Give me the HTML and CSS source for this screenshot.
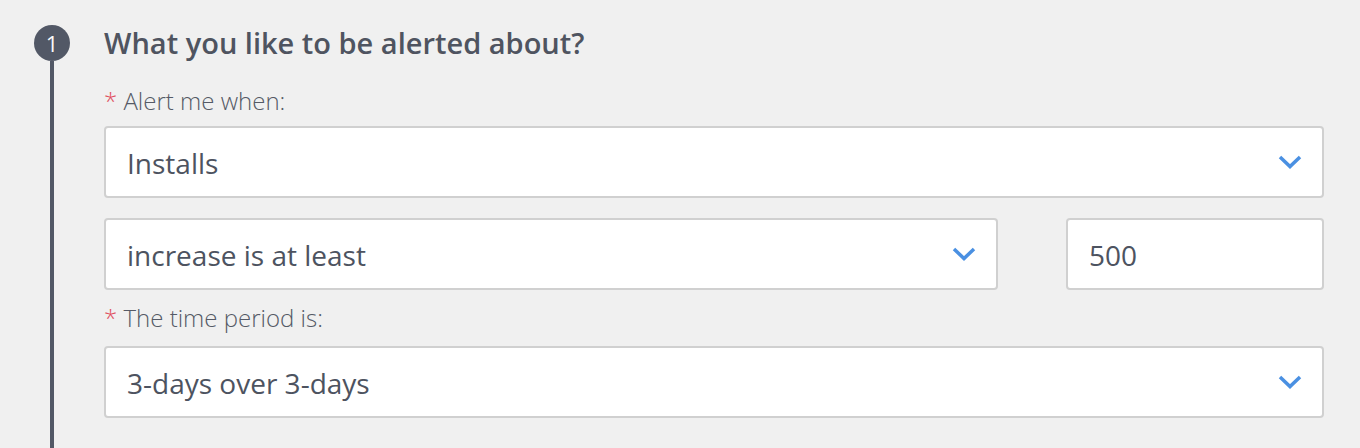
FILE: index.html
```html
<!DOCTYPE html>
<html lang="en">
<head>
	<meta charset="UTF-8" />
	<meta name="viewport" content="width=device-width, initial-scale=1.0" />
	<title>Alert setup</title>
	<link rel="stylesheet" href="styles.css">
</head>
<body>
	<div class="step">
		<div class="step-rail">
			<span class="step-num">1</span>
			<span class="step-line"></span>
		</div>
		<div class="step-body">
			<h2 class="step-title">What you like to be alerted about?</h2>

			<label class="field-label"><span class="req">*</span> Alert me when:</label>
			<div class="select">
				<span>Installs</span>
				<svg class="chevron" viewBox="0 0 24 14" width="24" height="14"><polyline points="2,2 12,11.5 22,2" /></svg>
			</div>

			<div class="row">
				<div class="select select-grow">
					<span>increase is at least</span>
					<svg class="chevron" viewBox="0 0 24 14" width="24" height="14"><polyline points="2,2 12,11.5 22,2" /></svg>
				</div>
				<div class="input">500</div>
			</div>

			<label class="field-label field-label-2"><span class="req">*</span> The time period is:</label>
			<div class="select">
				<span>3-days over 3-days</span>
				<svg class="chevron" viewBox="0 0 24 14" width="24" height="14"><polyline points="2,2 12,11.5 22,2" /></svg>
			</div>
		</div>
	</div>
</body>
</html>
```

FILE: styles.css
```css
html, body{
	margin: 0;
	background: #f0f0f0;
	font-family: "Open Sans", "Liberation Sans", sans-serif;
	color: #4e5461;
}
.step{
	display: flex;
	min-height: 448px;
	padding: 0 36px 0 34px;
}
.step-rail{
	display: flex;
	flex-direction: column;
	align-items: center;
	width: 36px;
	padding-top: 25px;
}
.step-num{
	display: flex;
	align-items: center;
	justify-content: center;
	width: 36px;
	height: 36px;
	border-radius: 50%;
	background: #525866;
	color: #fafafa;
	font-size: 22px;
	font-weight: 400;
	line-height: 1;
}
.step-line{
	flex: 1;
	width: 4px;
	background: #525866;
}
.step-body{
	flex: 1;
	margin-left: 34px;
	padding-top: 25px;
}
.step-title{
	margin: 0;
	font-size: 29px;
	font-weight: 600;
	line-height: 36px;
	color: #4f5460;
}
.field-label{
	display: block;
	margin: 24px 0 9px;
	font-size: 24px;
	font-weight: 300;
	line-height: 32px;
	color: #555a66;
}
.field-label-2{
	margin: 12px 0 12px;
}
.req{
	color: #e04f5f;
}
.select, .input{
	box-sizing: border-box;
	display: flex;
	align-items: center;
	height: 72px;
	padding: 2px 20px 0 21px;
	background: #fff;
	border: 2px solid #d0d0d0;
	border-radius: 4px;
	font-size: 28px;
	color: #4d5360;
}
.select span{
	flex: 1;
}
.chevron{
	fill: none;
	stroke: #4a90e2;
	stroke-width: 3.5;
	margin-top: -2px;
}
.row{
	display: flex;
	gap: 68px;
	margin-top: 20px;
}
.select-grow{
	flex: 1;
}
.input{
	width: 258px;
}
```
